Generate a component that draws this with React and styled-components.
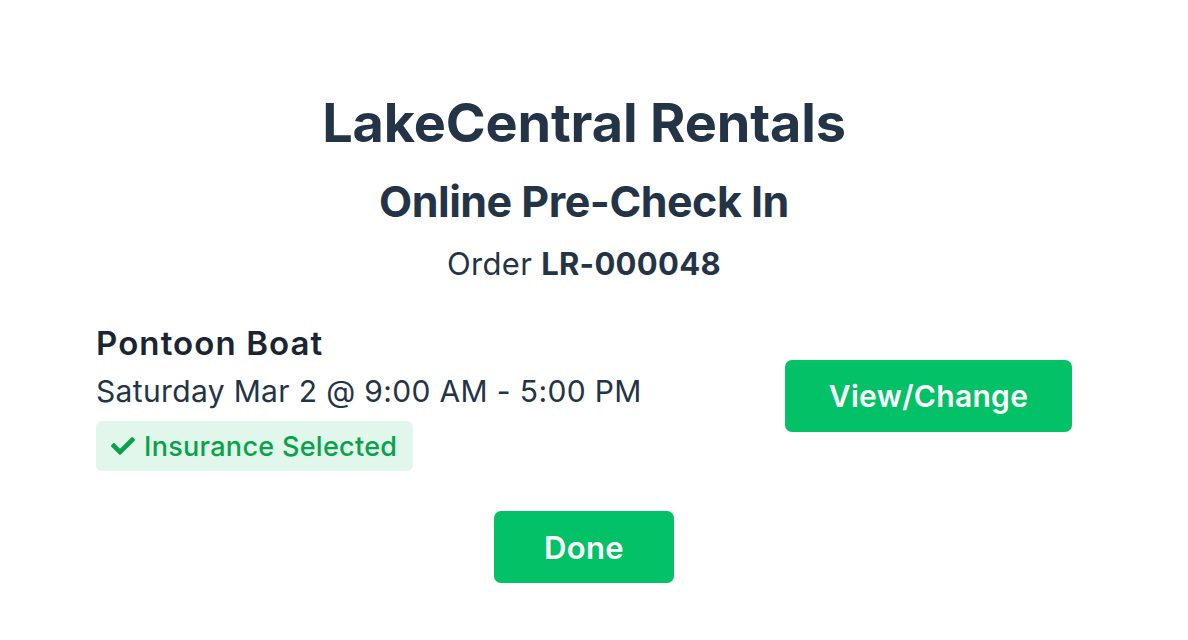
import styled, { createGlobalStyle } from "styled-components";
import { FaCheck } from "react-icons/fa";

const GlobalStyle = createGlobalStyle`
  html, body {
    margin: 0;
    padding: 0;
    background: #ffffff;
  }
  body {
    font-family: Inter, "Noto Sans", "Liberation Sans", sans-serif;
    color: #243447;
  }
`;

const Page = styled.div`
  width: 976px;
  margin-left: 96px;
  padding-top: 91px;
  display: flex;
  flex-direction: column;
  align-items: center;
`;

const Title = styled.h1`
  margin: 0;
  font-size: 54px;
  line-height: 64px;
  font-weight: 700;
  color: #243447;
  letter-spacing: -0.15px;
`;

const Subtitle = styled.h2`
  margin: 20px 0 0 0;
  font-size: 43px;
  line-height: 52px;
  font-weight: 700;
  color: #243447;
  letter-spacing: -0.5px;
`;

const OrderLine = styled.div`
  margin-top: 18px;
  font-size: 31px;
  line-height: 38px;
  color: #243447;
  letter-spacing: 0.3px;

  strong {
    font-weight: 700;
  }
`;

const ItemRow = styled.div`
  align-self: stretch;
  margin-top: 41px;
  display: flex;
  align-items: center;
  justify-content: space-between;
`;

const ItemInfo = styled.div`
  display: flex;
  flex-direction: column;
  align-items: flex-start;
`;

const ItemName = styled.div`
  font-size: 33px;
  line-height: 38px;
  font-weight: 600;
  color: #1a2433;
  letter-spacing: 1.1px;
`;

const ItemTime = styled.div`
  margin-top: 11px;
  font-size: 30px;
  line-height: 36px;
  color: #243447;
  letter-spacing: 0.35px;
`;

const Badge = styled.div`
  margin-top: 12px;
  height: 50px;
  box-sizing: border-box;
  padding: 0 16px 0 15px;
  display: flex;
  align-items: center;
  gap: 9px;
  background: #e1f7eb;
  border-radius: 6px;
  color: #0aa14b;
  font-size: 27px;
  font-weight: 500;
  letter-spacing: 0.3px;
`;

const Button = styled.button`
  width: ${(p) => p.$width}px;
  height: 72px;
  border: none;
  border-radius: 7px;
  background: #02c166;
  color: #ffffff;
  font-family: inherit;
  font-size: 30px;
  font-weight: 600;
  letter-spacing: 0.3px;
  cursor: pointer;
`;

const ChangeButton = styled(Button)`
  margin-bottom: 4px;
`;

const DoneButton = styled(Button)`
  margin-top: 40px;
  font-size: 31px;
`;

export default function App() {
  return (
    <>
      <GlobalStyle />
      <Page>
        <Title>LakeCentral Rentals</Title>
        <Subtitle>Online Pre-Check In</Subtitle>
        <OrderLine>
          Order <strong>LR-000048</strong>
        </OrderLine>
        <ItemRow>
          <ItemInfo>
            <ItemName>Pontoon Boat</ItemName>
            <ItemTime>Saturday Mar 2 @ 9:00 AM - 5:00 PM</ItemTime>
            <Badge>
              <FaCheck size={24} color="#0aa14b" />
              Insurance Selected
            </Badge>
          </ItemInfo>
          <ChangeButton $width={287}>View/Change</ChangeButton>
        </ItemRow>
        <DoneButton $width={180}>Done</DoneButton>
      </Page>
    </>
  );
}
